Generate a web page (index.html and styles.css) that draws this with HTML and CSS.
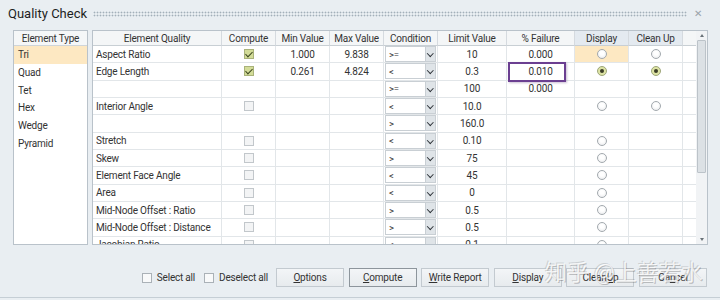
FILE: index.html
```html
<!DOCTYPE html>
<html>
<head>
<meta charset="utf-8">
<link rel="stylesheet" href="styles.css">
</head>
<body>
<div class="window">
  <div class="titlebar">
    <span class="title">Quality Check</span>
    <span class="grip"></span>
    <span class="close">✕</span>
  </div>
  <div class="content">
    <div class="types">
      <div class="types-head">Element Type</div>
      <div class="type sel">Tri</div>
      <div class="type">Quad</div>
      <div class="type">Tet</div>
      <div class="type">Hex</div>
      <div class="type">Wedge</div>
      <div class="type">Pyramid</div>
    </div>
    <div class="table">
      <div class="grid">
        <div class="row head">
          <div class="cell c">Element Quality</div>
          <div class="cell c">Compute</div>
          <div class="cell c">Min Value</div>
          <div class="cell c">Max Value</div>
          <div class="cell c">Condition</div>
          <div class="cell c">Limit Value</div>
          <div class="cell c">% Failure</div>
          <div class="cell c sorted">Display</div>
          <div class="cell c sorted">Clean Up</div>
          <div class="cell filler"></div>
        </div>
        <div class="body">
          <div class="row">
            <div class="cell name">Aspect Ratio</div>
            <div class="cell c"><span class="cb on"></span></div>
            <div class="cell c">1.000</div>
            <div class="cell c">9.838</div>
            <div class="cell cond"><span class="dd"><span class="op">&gt;=</span><span class="btn"></span></span></div>
            <div class="cell c">10</div>
            <div class="cell c">0.000</div>
            <div class="cell c hl"><span class="rb"></span></div>
            <div class="cell c"><span class="rb"></span></div>
            <div class="cell filler"></div>
          </div>
          <div class="row">
            <div class="cell name">Edge Length</div>
            <div class="cell c"><span class="cb on"></span></div>
            <div class="cell c">0.261</div>
            <div class="cell c">4.824</div>
            <div class="cell cond"><span class="dd"><span class="op">&lt;</span><span class="btn"></span></span></div>
            <div class="cell c">0.3</div>
            <div class="cell c">0.010<span class="mark"></span></div>
            <div class="cell c"><span class="rb on"></span></div>
            <div class="cell c"><span class="rb on"></span></div>
            <div class="cell filler"></div>
          </div>
          <div class="row">
            <div class="cell name"></div>
            <div class="cell c"></div>
            <div class="cell c"></div>
            <div class="cell c"></div>
            <div class="cell cond"><span class="dd"><span class="op">&gt;=</span><span class="btn"></span></span></div>
            <div class="cell c">100</div>
            <div class="cell c">0.000</div>
            <div class="cell c"></div>
            <div class="cell c"></div>
            <div class="cell filler"></div>
          </div>
          <div class="row">
            <div class="cell name">Interior Angle</div>
            <div class="cell c"><span class="cb"></span></div>
            <div class="cell c"></div>
            <div class="cell c"></div>
            <div class="cell cond"><span class="dd"><span class="op">&lt;</span><span class="btn"></span></span></div>
            <div class="cell c">10.0</div>
            <div class="cell c"></div>
            <div class="cell c"><span class="rb"></span></div>
            <div class="cell c"><span class="rb"></span></div>
            <div class="cell filler"></div>
          </div>
          <div class="row">
            <div class="cell name"></div>
            <div class="cell c"></div>
            <div class="cell c"></div>
            <div class="cell c"></div>
            <div class="cell cond"><span class="dd"><span class="op">&gt;</span><span class="btn"></span></span></div>
            <div class="cell c">160.0</div>
            <div class="cell c"></div>
            <div class="cell c"></div>
            <div class="cell c"></div>
            <div class="cell filler"></div>
          </div>
          <div class="row">
            <div class="cell name">Stretch</div>
            <div class="cell c"><span class="cb"></span></div>
            <div class="cell c"></div>
            <div class="cell c"></div>
            <div class="cell cond"><span class="dd"><span class="op">&lt;</span><span class="btn"></span></span></div>
            <div class="cell c">0.10</div>
            <div class="cell c"></div>
            <div class="cell c"><span class="rb"></span></div>
            <div class="cell c"></div>
            <div class="cell filler"></div>
          </div>
          <div class="row">
            <div class="cell name">Skew</div>
            <div class="cell c"><span class="cb"></span></div>
            <div class="cell c"></div>
            <div class="cell c"></div>
            <div class="cell cond"><span class="dd"><span class="op">&gt;</span><span class="btn"></span></span></div>
            <div class="cell c">75</div>
            <div class="cell c"></div>
            <div class="cell c"><span class="rb"></span></div>
            <div class="cell c"></div>
            <div class="cell filler"></div>
          </div>
          <div class="row">
            <div class="cell name">Element Face Angle</div>
            <div class="cell c"><span class="cb"></span></div>
            <div class="cell c"></div>
            <div class="cell c"></div>
            <div class="cell cond"><span class="dd"><span class="op">&lt;</span><span class="btn"></span></span></div>
            <div class="cell c">45</div>
            <div class="cell c"></div>
            <div class="cell c"><span class="rb"></span></div>
            <div class="cell c"></div>
            <div class="cell filler"></div>
          </div>
          <div class="row">
            <div class="cell name">Area</div>
            <div class="cell c"><span class="cb"></span></div>
            <div class="cell c"></div>
            <div class="cell c"></div>
            <div class="cell cond"><span class="dd"><span class="op">&lt;</span><span class="btn"></span></span></div>
            <div class="cell c">0</div>
            <div class="cell c"></div>
            <div class="cell c"><span class="rb"></span></div>
            <div class="cell c"></div>
            <div class="cell filler"></div>
          </div>
          <div class="row">
            <div class="cell name">Mid-Node Offset : Ratio</div>
            <div class="cell c"><span class="cb"></span></div>
            <div class="cell c"></div>
            <div class="cell c"></div>
            <div class="cell cond"><span class="dd"><span class="op">&gt;</span><span class="btn"></span></span></div>
            <div class="cell c">0.5</div>
            <div class="cell c"></div>
            <div class="cell c"><span class="rb"></span></div>
            <div class="cell c"></div>
            <div class="cell filler"></div>
          </div>
          <div class="row">
            <div class="cell name">Mid-Node Offset : Distance</div>
            <div class="cell c"><span class="cb"></span></div>
            <div class="cell c"></div>
            <div class="cell c"></div>
            <div class="cell cond"><span class="dd"><span class="op">&gt;</span><span class="btn"></span></span></div>
            <div class="cell c">0.5</div>
            <div class="cell c"></div>
            <div class="cell c"><span class="rb"></span></div>
            <div class="cell c"></div>
            <div class="cell filler"></div>
          </div>
          <div class="row">
            <div class="cell name">Jacobian Ratio</div>
            <div class="cell c"><span class="cb"></span></div>
            <div class="cell c"></div>
            <div class="cell c"></div>
            <div class="cell cond"><span class="dd"><span class="op">&lt;</span><span class="btn"></span></span></div>
            <div class="cell c">0.1</div>
            <div class="cell c"></div>
            <div class="cell c"><span class="rb"></span></div>
            <div class="cell c"></div>
            <div class="cell filler"></div>
          </div>
        </div>
      </div>
      <div class="vscroll">
        <span class="arrow up"></span>
        <span class="thumb"></span>
        <span class="spacer"></span>
        <span class="arrow down"></span>
      </div>
    </div>
  </div>
  <div class="footer">
    <label class="chk"><span class="box"></span>Select all</label>
    <label class="chk"><span class="box"></span>Deselect all</label>
    <div class="buttons">
      <button class="bt"><u>O</u>ptions</button>
      <button class="bt def"><u>C</u>ompute</button>
      <button class="bt"><u>W</u>rite Report</button>
      <button class="bt"><u>D</u>isplay</button>
      <button class="bt">Clean<u>U</u>p</button>
      <button class="bt">Ca<u>n</u>cel</button>
    </div>
  </div>
  <div class="watermark">知乎 @上善若水</div>
</div>
</body>
</html>
```

FILE: styles.css
```css
* { box-sizing: border-box; }

body {
  margin: 0;
  font-family: Roboto, "Liberation Sans", sans-serif;
  font-size: 10px;
  letter-spacing: -0.2px;
  color: #333;
}

.window {
  position: relative;
  width: 720px;
  height: 300px;
  background: #e9eef2;
  overflow: hidden;
  display: flex;
  flex-direction: column;
}

.titlebar {
  height: 30px;
  flex: none;
  display: flex;
  align-items: center;
  padding: 0 17px 3px 8px;
}

.title {
  font-size: 13px;
  letter-spacing: 0;
  color: #1e1e1e;
}

.grip {
  flex: 1;
  height: 6px;
  margin: 0 6px 0 6px;
  background-image: radial-gradient(circle at center, #a3afba 0.8px, transparent 1.1px);
  background-size: 3px 3px;
}

.close {
  width: 10px;
  font-size: 10px;
  color: #9aa3aa;
  text-align: center;
}

.content {
  height: 215px;
  flex: none;
  display: flex;
  gap: 4px;
  padding: 0 12px 0 13px;
}

.types {
  width: 75px;
  background: #fff;
  border: 1px solid #b9c2ca;
}

.types-head {
  height: 15px;
  background: #f5f7f8;
  border-bottom: 1px solid #cfd5da;
  display: flex;
  align-items: center;
  justify-content: center;
}

.type {
  height: 17.7px;
  padding-left: 4px;
  display: flex;
  align-items: center;
}

.type.sel { background: #fde8c2; }

.table {
  flex: 1;
  display: flex;
  background: #fff;
  border: 1px solid #b9c2ca;
}

.grid {
  flex: 1;
  overflow: hidden;
}

.row {
  display: grid;
  grid-template-columns: 129px 54px 54px 54px 54px 69px 68px 54px 54px 1fr;
}

.cell {
  display: flex;
  align-items: center;
  position: relative;
  border-right: 1px solid #e2e6e9;
  border-bottom: 1px solid #e2e6e9;
  white-space: nowrap;
}

.cell.filler { border-right: none; }

.head .cell {
  height: 15px;
  background: #f4f6f7;
  border-right-color: #d5dadf;
  border-bottom-color: #c8cfd4;
}

.head .cell.sorted { background: #e4eaf0; }

.body .row { height: 17.33px; }

.c { justify-content: center; }

.name { padding-left: 3px; }

.hl { background: #fde8c2; }

.cond { padding: 0 1px; }

.dd {
  width: 53px;
  height: 16px;
  display: flex;
  background: #fff;
  border: 1px solid #c9cfd4;
}

.op {
  flex: 1;
  padding-left: 3px;
  font-size: 9.5px;
  display: flex;
  align-items: center;
}

.btn {
  width: 10px;
  background: #dfe4e8;
  border-left: 1px solid #c9cfd4;
  display: flex;
  align-items: center;
  justify-content: center;
}

.btn::after {
  content: "";
  width: 3.5px;
  height: 3.5px;
  border-right: 1.6px solid #2e3338;
  border-bottom: 1.6px solid #2e3338;
  transform: rotate(45deg);
  margin-top: -2px;
}

.cb {
  width: 10px;
  height: 10px;
  border: 1px solid #c2c7cb;
  background: #f3f4f5;
  display: flex;
  align-items: center;
  justify-content: center;
}

.cb.on {
  background: #d3dc98;
  border-color: #a9b27a;
}

.cb.on::after {
  content: "";
  width: 3px;
  height: 6px;
  border-right: 1.6px solid #3d4820;
  border-bottom: 1.6px solid #3d4820;
  transform: rotate(45deg);
  margin-top: -2px;
}

.rb {
  width: 10px;
  height: 10px;
  border-radius: 50%;
  border: 1px solid #a3a9ae;
  background: radial-gradient(circle at 50% 40%, #ffffff 30%, #e6e8ea 100%);
  display: flex;
  align-items: center;
  justify-content: center;
}

.rb.on {
  background: #dde3a4;
  border-color: #9ea67a;
}

.rb.on::after {
  content: "";
  width: 4px;
  height: 4px;
  border-radius: 50%;
  background: #3b3d28;
}

.mark {
  position: absolute;
  left: 1px;
  top: -1px;
  width: 58px;
  height: 20px;
  border: 2px solid #6b3f91;
  box-shadow: 1px 1px 2px rgba(80, 40, 110, 0.3);
}

.vscroll {
  width: 11px;
  display: flex;
  flex-direction: column;
  align-items: center;
  background: #f1f3f5;
}

.arrow {
  height: 9px;
  display: flex;
  align-items: center;
  justify-content: center;
}

.arrow::after {
  content: "";
  border-left: 2.5px solid transparent;
  border-right: 2.5px solid transparent;
}

.arrow.up::after { border-bottom: 3px solid #6a7278; }
.arrow.down::after { border-top: 3px solid #6a7278; }
.arrow.down { height: 10px; }

.thumb {
  width: 9px;
  height: 133px;
  background: #dce1e5;
  border: 1px solid #bcc3c9;
  border-radius: 1px;
}

.spacer { flex: 1; }

.footer {
  height: 53px;
  flex: none;
  display: flex;
  align-items: flex-start;
  justify-content: flex-end;
  padding: 23px 13px 0 0;
  border-bottom: 1px solid #c5ced5;
}

.chk {
  display: flex;
  align-items: center;
  gap: 5px;
  height: 19px;
  margin-right: 9px;
}

.box {
  width: 10px;
  height: 10px;
  border: 1px solid #aab1b7;
  background: #f8f9fa;
}

.buttons {
  display: flex;
  gap: 4.6px;
  margin-left: -1px;
}

.bt {
  width: 68px;
  height: 19px;
  padding: 0;
  font-family: Roboto, "Liberation Sans", sans-serif;
  font-size: 10px;
  letter-spacing: -0.2px;
  color: #333;
  background: linear-gradient(#f3f5f7, #e7ebee);
  border: 1px solid #c3cad0;
  border-radius: 0;
}

.bt.def { border-color: #8d959c; }

.watermark {
  position: absolute;
  left: 545px;
  top: 254px;
  font-family: "Noto Sans CJK SC", sans-serif;
  font-size: 22px;
  letter-spacing: 0;
  color: rgba(255, 255, 255, 0.8);
  text-shadow: 1px 1px 0 rgba(90, 90, 90, 0.35), -1px -1px 0 rgba(120, 120, 120, 0.25);
  white-space: nowrap;
}
```
